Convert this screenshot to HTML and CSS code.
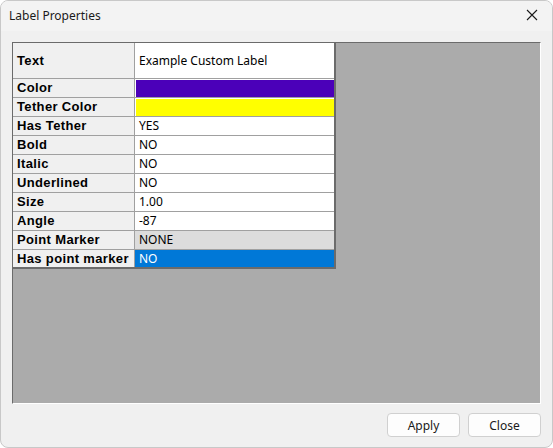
FILE: index.html
```html
<!DOCTYPE html>
<html lang="en">
<head>
  <meta charset="UTF-8" />
  <title>Label Properties</title>
  <link rel="stylesheet" href="styles.css">
</head>
<body>

<div class="window">
  <div class="titlebar">
    <span class="title">Label Properties</span>
    <svg class="close-x" width="12" height="12" viewBox="0 0 12 12">
      <path d="M1 1 L11 11 M11 1 L1 11" stroke="#1a1a1a" stroke-width="1.1" fill="none" />
    </svg>
  </div>

  <div class="content">
    <div class="grid-panel">
      <table class="props">
        <tr class="tall">
          <td class="name">Text</td>
          <td class="val">Example Custom Label</td>
        </tr>
        <tr>
          <td class="name">Color</td>
          <td class="val swatch"><div class="chip purple"></div></td>
        </tr>
        <tr>
          <td class="name">Tether Color</td>
          <td class="val swatch"><div class="chip yellow"></div></td>
        </tr>
        <tr><td class="name">Has Tether</td><td class="val">YES</td></tr>
        <tr><td class="name">Bold</td><td class="val">NO</td></tr>
        <tr><td class="name">Italic</td><td class="val">NO</td></tr>
        <tr><td class="name">Underlined</td><td class="val">NO</td></tr>
        <tr><td class="name">Size</td><td class="val">1.00</td></tr>
        <tr><td class="name">Angle</td><td class="val">-87</td></tr>
        <tr><td class="name">Point Marker</td><td class="val readonly">NONE</td></tr>
        <tr><td class="name">Has point marker</td><td class="val selected">NO</td></tr>
      </table>
    </div>

    <div class="buttons">
      <button class="btn">Apply</button>
      <button class="btn">Close</button>
    </div>
  </div>
</div>

</body>
</html>
```

FILE: styles.css
```css
body {
  margin: 0;
  padding: 0;
  width: 553px;
  height: 448px;
  background: #ffffff;
  overflow: hidden;
  font-family: 'Noto Sans', 'Open Sans', sans-serif;
}

.window {
  box-sizing: border-box;
  width: 553px;
  height: 448px;
  border: 1px solid #c8c8c8;
  border-radius: 8px;
  background: #f0f0f0;
  overflow: hidden;
  display: flex;
  flex-direction: column;
}

.titlebar {
  height: 30px;
  flex: none;
  display: flex;
  align-items: center;
  justify-content: space-between;
  padding: 0 14px 2px 8px;
  box-sizing: border-box;
  background: #f3f3f3;
}

.title {
  font-size: 12px;
  color: #1a1a1a;
}

.content {
  flex: 1;
  display: flex;
  flex-direction: column;
  padding: 11px 11px 0 11px;
}

.grid-panel {
  height: 360px;
  background: #ababab;
  border-top: 1px solid #6b6b6b;
  border-left: 1px solid #6b6b6b;
  border-right: 1px solid #ffffff;
  border-bottom: 1px solid #ffffff;
}

.props {
  border-collapse: collapse;
  border-right: 2px solid #6b6b6b;
  border-bottom: 2px solid #6b6b6b;
  font-size: 12px;
  line-height: 17px;
}

.props tr {
  height: 19px;
}

.props tr.tall {
  height: 35px;
}

.props td {
  padding: 0 0 0 4px;
  border: 1px solid #a0a0a0;
  white-space: nowrap;
}

.props tr:first-child td { border-top: none; }
.props td:first-child { border-left: none; }

.name {
  width: 117px;
  background: #f0f0f0;
  font-family: 'Liberation Sans', Arial, sans-serif;
  font-weight: bold;
  font-size: 13px;
  letter-spacing: 0.35px;
  color: #000;
  padding-top: 1px;
}

.val {
  width: 195px;
  background: #ffffff;
  color: #000;
}

.val.swatch {
  padding: 1px 0 0 1px;
  line-height: 0;
}

.chip {
  height: 17px;
}

.purple { background: #4b00b9; }
.yellow { background: #ffff00; }

.val.readonly { background: #dcdcdc; }
.val.selected { background: #0078d7; color: #ffffff; }

.buttons {
  display: flex;
  justify-content: flex-end;
  gap: 8px;
  padding-top: 9px;
}

.btn {
  width: 73px;
  height: 24px;
  background: #fdfdfd;
  border: 1px solid #d0d0d0;
  border-radius: 4px;
  font-family: 'Noto Sans', 'Open Sans', sans-serif;
  font-size: 12px;
  color: #1a1a1a;
  padding: 0;
}
```
